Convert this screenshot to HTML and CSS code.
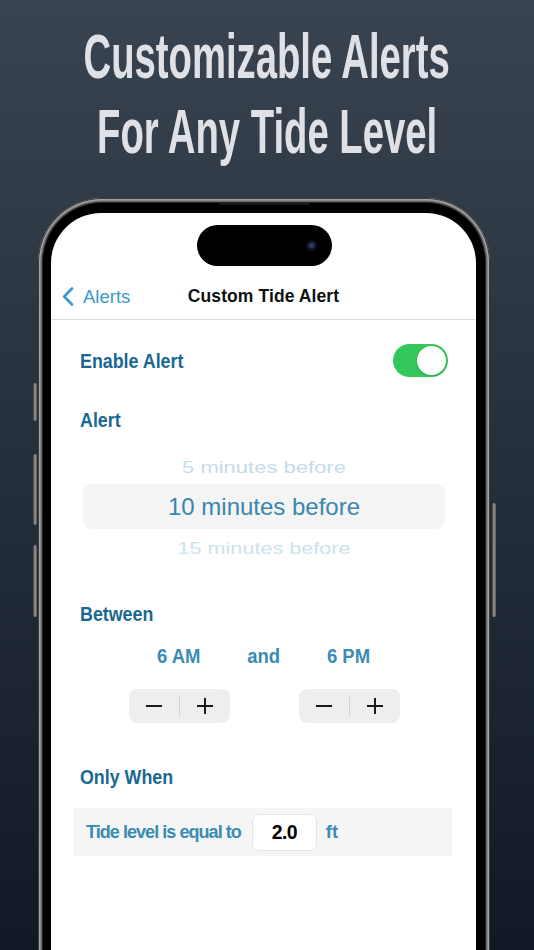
FILE: index.html
```html
<!DOCTYPE html>
<html lang="en">
<head>
<meta charset="utf-8">
<title>Customizable Alerts</title>
<link rel="stylesheet" href="styles.css">
</head>
<body>
<header class="hero">
  <span class="hero-line">Customizable Alerts</span>
  <span class="hero-line">For Any Tide Level</span>
</header>
<div class="phone">
  <span class="side side-l1"></span>
  <span class="side side-l2"></span>
  <span class="side side-l3"></span>
  <span class="side side-r1"></span>
  <span class="speaker"></span>
  <div class="screen">
    <div class="island"><span class="cam"></span></div>
    <nav class="nav">
      <div class="nav-row">
        <div class="back">
          <svg class="chev" width="12" height="19" viewBox="0 0 12 19"><polyline points="10,1.5 2.2,9.5 10,17.5" fill="none" stroke="#3d9ac8" stroke-width="2.6" stroke-linecap="round" stroke-linejoin="round"/></svg>
          <span>Alerts</span>
        </div>
        <div class="nav-title">Custom Tide Alert</div>
        <div></div>
      </div>
    </nav>
    <main class="content">
      <div class="toggle-row">
        <span class="label">Enable Alert</span>
        <span class="switch"><span class="knob"></span></span>
      </div>
      <div class="label-row alert-label"><span class="label">Alert</span></div>
      <div class="picker">
        <div class="pick pick-prev">5 minutes before</div>
        <div class="pick pick-sel">10 minutes before</div>
        <div class="pick pick-next">15 minutes before</div>
      </div>
      <div class="label-row between-label"><span class="label">Between</span></div>
      <div class="range">
        <span class="time"><span class="time-text">6 AM</span></span>
        <span class="time"><span class="time-text">and</span></span>
        <span class="time"><span class="time-text">6 PM</span></span>
        <div class="stepper">
          <span class="minus"></span><span class="div"></span><span class="plus"></span>
        </div>
        <div></div>
        <div class="stepper">
          <span class="minus"></span><span class="div"></span><span class="plus"></span>
        </div>
      </div>
      <div class="label-row only-label"><span class="label">Only When</span></div>
      <div class="cond">
        <span class="cond-text">Tide level is equal to</span>
        <span class="cond-input">2.0</span>
        <span class="cond-unit">ft</span>
      </div>
    </main>
  </div>
</div>
</body>
</html>
```

FILE: styles.css
```css
html, body {
  margin: 0;
  padding: 0;
}
body {
  width: 534px;
  height: 950px;
  overflow: hidden;
  background: linear-gradient(180deg, #3a4350 0%, #27303d 45%, #101925 100%);
  font-family: "Liberation Sans", Arial, sans-serif;
}
.hero {
  display: flex;
  flex-direction: column;
  align-items: center;
  padding-top: 19px;
  height: 150px;
  overflow: hidden;
  font-family: "Liberation Sans", Arial, sans-serif;
  font-weight: 700;
  font-size: 63px;
  line-height: 75px;
  color: #dfe1e6;
}
.hero-line {
  display: block;
  white-space: nowrap;
  transform: scaleX(0.607);
  transform-origin: center;
}
.phone {
  position: relative;
  margin: 29px 0 0 38px;
  width: 452px;
  height: 820px;
  box-sizing: border-box;
  padding: 15px 14px 0 13px;
  border-radius: 64px;
  background: #000;
  box-shadow:
    inset 0 0 0 1px #3c3c3c,
    inset 0 0 0 2.5px #a3a3a3,
    inset 0 0 0 4px #6a6a6a,
    inset 0 0 0 5px #262626;
}
.side {
  position: absolute;
  width: 4px;
  border-radius: 2px;
  background: linear-gradient(90deg, #3a3a3a, #9a9a9a 50%, #555);
}
.side-l1 { left: -5px; top: 185px; height: 38px; }
.side-l2 { left: -5px; top: 256px; height: 71px; }
.side-l3 { left: -5px; top: 347px; height: 72px; }
.side-r1 { right: -6px; top: 305px; height: 114px; }
.speaker {
  position: absolute;
  left: 181px;
  top: 5px;
  width: 91px;
  height: 2px;
  border-radius: 1px;
  background: #1a1a1a;
}
.screen {
  position: relative;
  width: 425px;
  height: 805px;
  background: #fff;
  border-radius: 50px 50px 0 0;
  overflow: hidden;
}
.island {
  position: absolute;
  left: 146px;
  top: 12px;
  width: 135px;
  height: 41px;
  border-radius: 21px;
  background: #000;
}
.cam {
  position: absolute;
  right: 15px;
  top: 15px;
  width: 11px;
  height: 11px;
  border-radius: 50%;
  background: radial-gradient(circle, #2a3a6a 0 2px, #141a2c 3px, #0a0a12 6px);
}
.nav {
  padding-top: 61px;
  border-bottom: 1px solid #dcdcdc;
}
.nav-row {
  height: 45px;
  display: grid;
  grid-template-columns: 1fr auto 1fr;
  align-items: center;
}
.back {
  display: flex;
  align-items: center;
  gap: 9px;
  padding-left: 11px;
  font-size: 18.5px;
  color: #3d9ac8;
}
.chev {
  display: block;
}
.nav-title {
  font-size: 17.5px;
  font-weight: 700;
  color: #111;
  letter-spacing: 0.1px;
}
.content {
  padding: 0 28px 0 29px;
}
.label-row {
  height: 24px;
}
.label {
  display: inline-block;
  font-size: 20.5px;
  line-height: 24px;
  font-weight: 700;
  color: #1a6892;
  white-space: nowrap;
  transform: scaleX(0.87);
  transform-origin: left center;
}
.toggle-row {
  margin-top: 24px;
  height: 33px;
  display: flex;
  align-items: center;
  justify-content: space-between;
}
.switch {
  width: 55px;
  height: 33px;
  box-sizing: border-box;
  padding: 2px;
  border-radius: 17px;
  background: #34c759;
  display: flex;
  justify-content: flex-end;
}
.knob {
  width: 29px;
  height: 29px;
  border-radius: 50%;
  background: #fff;
  box-shadow: 0 1px 3px rgba(0, 0, 0, 0.18);
}
.alert-label {
  margin-top: 31px;
}
.picker {
  margin: 20px 3px 0;
  height: 103px;
  overflow: hidden;
  display: flex;
  flex-direction: column;
  text-align: center;
}
.pick {
  flex: none;
  white-space: nowrap;
}
.pick-prev {
  height: 32px;
  line-height: 32px;
  font-size: 22px;
  color: #c5dce8;
  transform: scaleY(0.74);
}
.pick-sel {
  height: 45px;
  line-height: 45px;
  border-radius: 9px;
  background: #f4f4f5;
  font-size: 24px;
  color: #3a86ad;
}
.pick-next {
  height: 40px;
  line-height: 40px;
  font-size: 21.6px;
  color: #cde2ec;
  transform: scaleY(0.78);
}
.between-label {
  margin-top: 47px;
}
.range {
  margin-top: 18px;
  display: grid;
  grid-template-columns: 101px 69px 101px;
  justify-content: center;
  row-gap: 21px;
}
.time {
  display: flex;
  justify-content: center;
  height: 24px;
}
.time-text {
  display: block;
  font-size: 21px;
  line-height: 24px;
  font-weight: 700;
  color: #3b8cb2;
  white-space: nowrap;
  transform: scaleX(0.88);
  transform-origin: center;
}
.stepper {
  height: 34px;
  border-radius: 8px;
  background: #eeeeef;
  display: flex;
  align-items: center;
}
.minus, .plus {
  position: relative;
  flex: 1;
  height: 34px;
}
.minus::before, .plus::before, .plus::after {
  content: "";
  position: absolute;
  left: 50%;
  top: 50%;
  background: #1a1a1a;
}
.minus::before, .plus::before {
  width: 16px;
  height: 2px;
  margin: -1px 0 0 -8px;
}
.plus::after {
  width: 2px;
  height: 16px;
  margin: -8px 0 0 -1px;
}
.div {
  width: 1px;
  height: 19px;
  background: #d2d2d4;
}
.only-label {
  margin-top: 42px;
}
.cond {
  margin: 19px -4px 0 -6px;
  height: 48px;
  padding-left: 12px;
  background: #f5f5f5;
  display: flex;
  align-items: center;
}
.cond-text {
  font-size: 18px;
  font-weight: 700;
  letter-spacing: -0.95px;
  color: #3b8cb2;
}
.cond-input {
  margin-left: 11px;
  width: 65px;
  height: 37px;
  box-sizing: border-box;
  border: 1px solid #e4e4e4;
  border-radius: 7px;
  background: #fff;
  display: flex;
  align-items: center;
  justify-content: center;
  font-size: 19.5px;
  font-weight: 700;
  letter-spacing: -0.6px;
  color: #000;
}
.cond-unit {
  margin-left: 9px;
  font-size: 18.5px;
  font-weight: 700;
  color: #3b8cb2;
}
```
